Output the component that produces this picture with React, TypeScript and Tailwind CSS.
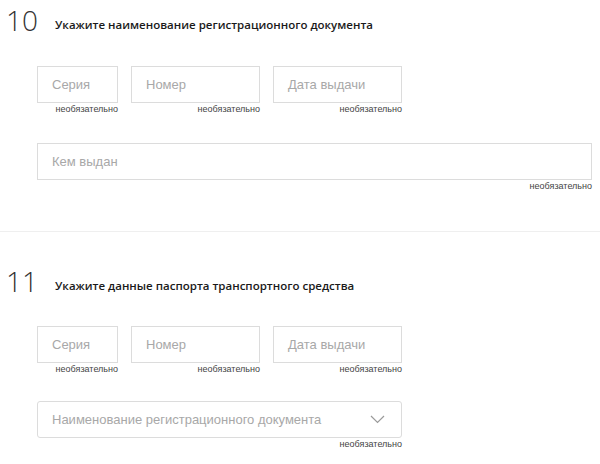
const Optional = ({ className = '' }: { className?: string }) => (
  <div className={`text-right text-[9px] leading-[10px] text-[#444] mt-[1px] ${className}`}>необязательно</div>
);

function Field({ placeholder, width }: { placeholder: string; width: string }) {
  return (
    <div className={width}>
      <div className="h-[37px] border border-[#dcdcdc] flex items-center px-[14px] text-[13px] text-[#a8a8a8]">
        {placeholder}
      </div>
      <Optional />
    </div>
  );
}

function DocRow() {
  return (
    <div className="flex gap-[13px]">
      <Field placeholder="Серия" width="w-[81px]" />
      <Field placeholder="Номер" width="w-[129px]" />
      <Field placeholder="Дата выдачи" width="w-[129px]" />
    </div>
  );
}

function Header({ num, title }: { num: string; title: string }) {
  return (
    <div className="flex items-end pl-[6px]">
      <div className="w-[49px] text-[28px] leading-[30px] font-light text-[#333] font-['Open_Sans',sans-serif]">{num}</div>
      <div className="text-[11.5px] leading-[16px] font-semibold text-[#1a1a1a] font-['Open_Sans',sans-serif] mb-[2px]">
        {title}
      </div>
    </div>
  );
}

export default function App() {
  return (
    <div className="w-[600px] h-[464px] bg-white overflow-hidden font-['Liberation_Sans',Arial,sans-serif]">
      {/* Section 10 */}
      <section className="pt-[5px] pb-[40px] border-b border-[#efefef]">
        <Header num="10" title="Укажите наименование регистрационного документа" />
        <div className="pl-[37px] pr-[8px] mt-[31px]">
          <DocRow />
          <div className="mt-[29px]">
            <div className="h-[37px] border border-[#dcdcdc] flex items-center px-[14px] text-[13px] text-[#a8a8a8]">
              Кем выдан
            </div>
            <Optional />
          </div>
        </div>
      </section>

      {/* Section 11 */}
      <section className="pt-[34px]">
        <Header num="11" title="Укажите данные паспорта транспортного средства" />
        <div className="pl-[37px] mt-[30px]">
          <DocRow />
          <div className="w-[365px] mt-[27px]">
            <div className="h-[37px] border border-[#dcdcdc] rounded-[3px] flex items-center justify-between pl-[14px] pr-[16px] text-[13px] text-[#a8a8a8]">
              <span>Наименование регистрационного документа</span>
              <svg width="15" height="9" viewBox="0 0 15 9" fill="none" stroke="#9a9a9a" strokeWidth="1.2">
                <polyline points="1,1 7.5,7.5 14,1" />
              </svg>
            </div>
            <Optional />
          </div>
        </div>
      </section>
    </div>
  );
}
